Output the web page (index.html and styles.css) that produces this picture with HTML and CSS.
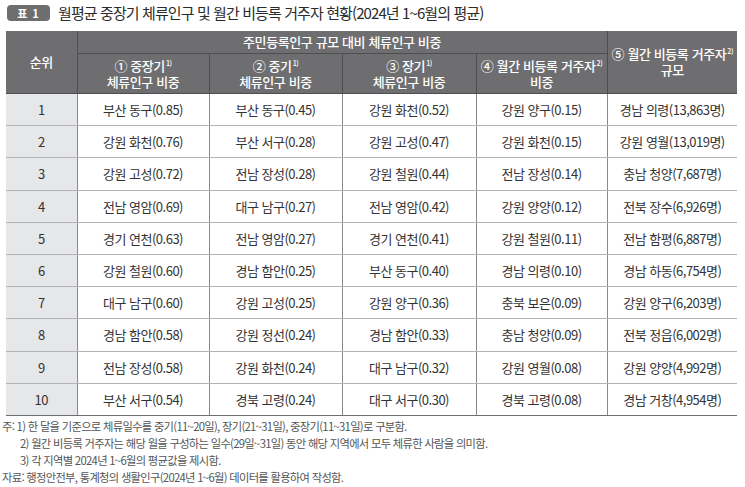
FILE: index.html
```html
<!DOCTYPE html>
<html lang="ko">
<head>
<meta charset="utf-8">
<link rel="stylesheet" href="styles.css">
</head>
<body>
<div class="page">
  <div class="title">
    <span class="badge">표 1</span>
    <span class="title-text">월평균 중장기 체류인구 및 월간 비등록 거주자 현황(2024년 1~6월의 평균)</span>
  </div>
  <table class="tbl">
    <colgroup>
      <col class="c0"><col class="c1"><col class="c2"><col class="c3"><col class="c4"><col class="c5">
    </colgroup>
    <thead>
      <tr class="h1">
        <th rowspan="2">순위</th>
        <th colspan="4">주민등록인구 규모 대비 체류인구 비중</th>
        <th rowspan="2"><span class="ln">⑤ 월간 비등록 거주자<sup>2)</sup></span><span class="ln">규모</span></th>
      </tr>
      <tr class="h2">
        <th><span class="ln">① 중장기<sup>1)</sup></span><span class="ln">체류인구 비중</span></th>
        <th><span class="ln">② 중기<sup>1)</sup></span><span class="ln">체류인구 비중</span></th>
        <th><span class="ln">③ 장기<sup>1)</sup></span><span class="ln">체류인구 비중</span></th>
        <th><span class="ln">④ 월간 비등록 거주자<sup>2)</sup></span><span class="ln">비중</span></th>
      </tr>
    </thead>
    <tbody>
      <tr><td class="rk">1</td><td>부산 동구(0.85)</td><td>부산 동구(0.45)</td><td>강원 화천(0.52)</td><td>강원 양구(0.15)</td><td>경남 의령(13,863명)</td></tr>
      <tr><td class="rk">2</td><td>강원 화천(0.76)</td><td>부산 서구(0.28)</td><td>강원 고성(0.47)</td><td>강원 화천(0.15)</td><td>강원 영월(13,019명)</td></tr>
      <tr><td class="rk">3</td><td>강원 고성(0.72)</td><td>전남 장성(0.28)</td><td>강원 철원(0.44)</td><td>전남 장성(0.14)</td><td>충남 청양(7,687명)</td></tr>
      <tr><td class="rk">4</td><td>전남 영암(0.69)</td><td>대구 남구(0.27)</td><td>전남 영암(0.42)</td><td>강원 양양(0.12)</td><td>전북 장수(6,926명)</td></tr>
      <tr><td class="rk">5</td><td>경기 연천(0.63)</td><td>전남 영암(0.27)</td><td>경기 연천(0.41)</td><td>강원 철원(0.11)</td><td>전남 함평(6,887명)</td></tr>
      <tr><td class="rk">6</td><td>강원 철원(0.60)</td><td>경남 함안(0.25)</td><td>부산 동구(0.40)</td><td>경남 의령(0.10)</td><td>경남 하동(6,754명)</td></tr>
      <tr><td class="rk">7</td><td>대구 남구(0.60)</td><td>강원 고성(0.25)</td><td>강원 양구(0.36)</td><td>충북 보은(0.09)</td><td>강원 양구(6,203명)</td></tr>
      <tr><td class="rk">8</td><td>경남 함안(0.58)</td><td>강원 정선(0.24)</td><td>경남 함안(0.33)</td><td>충남 청양(0.09)</td><td>전북 정읍(6,002명)</td></tr>
      <tr><td class="rk">9</td><td>전남 장성(0.58)</td><td>강원 화천(0.24)</td><td>대구 남구(0.32)</td><td>강원 영월(0.08)</td><td>강원 양양(4,992명)</td></tr>
      <tr><td class="rk">10</td><td>부산 서구(0.54)</td><td>경북 고령(0.24)</td><td>대구 서구(0.30)</td><td>경북 고령(0.08)</td><td>경남 거창(4,954명)</td></tr>
    </tbody>
  </table>
  <div class="notes">
    <p>주: 1) 한 달을 기준으로 체류일수를 중기(11~20일), 장기(21~31일), 중장기(11~31일)로 구분함.</p>
    <p class="ind">2) 월간 비등록 거주자는 해당 월을 구성하는 일수(29일~31일) 동안 해당 지역에서 모두 체류한 사람을 의미함.</p>
    <p class="ind">3) 각 지역별 2024년 1~6월의 평균값을 제시함.</p>
    <p>자료: 행정안전부, 통계청의 생활인구(2024년 1~6월) 데이터를 활용하여 작성함.</p>
  </div>
</div>
</body>
</html>
```

FILE: styles.css
```css
html, body {
  margin: 0;
  padding: 0;
  background: #ffffff;
}
body {
  font-family: "Noto Sans CJK KR", "Noto Sans", sans-serif;
  color: #333;
}
.page {
  width: 745px;
  height: 487px;
  overflow: hidden;
  padding: 3px 0 0 6px;
  box-sizing: border-box;
}
.title {
  display: flex;
  align-items: center;
  height: 19px;
  gap: 8px;
  padding-left: 1px;
}
.badge {
  display: inline-flex;
  align-items: center;
  justify-content: center;
  width: 43px;
  height: 16px;
  border-radius: 4px;
  background: #6d6e70;
  color: #fff;
  font-size: 11px;
  font-weight: 700;
  letter-spacing: 1px;
}
.title-text {
  font-size: 15px;
  color: #2b2b2b;
  letter-spacing: -0.9px;
  white-space: nowrap;
}
.tbl {
  margin-top: 9px;
  border-collapse: collapse;
  table-layout: fixed;
  width: 731px;
  font-size: 13px;
}
.c0 { width: 71px; }
.c1 { width: 132px; }
.c2 { width: 133px; }
.c3 { width: 134px; }
.c4 { width: 131px; }
.c5 { width: 130px; }
.tbl th {
  background: #6e6e70;
  color: #fff;
  font-weight: 500;
  font-size: 13px;
  line-height: 16px;
  border: 1px solid #4e4e50;
  border-top: 0;
  padding: 0;
  letter-spacing: -0.4px;
}
.tbl th .ln {
  display: block;
  height: 16px;
  line-height: 16px;
}
.tbl thead tr th:first-child { border-left: 0; }
.tbl thead tr.h1 th:last-child { border-right: 0; }
.tbl tr.h1 th { height: 22px; }
.tbl tr.h2 th { height: 39px; }
.tbl sup {
  font-size: 7px;
  line-height: 0;
  vertical-align: 5px;
  margin-left: 1px;
}
.tbl td {
  height: 31.2px;
  padding: 0;
  text-align: center;
  color: #333;
  border-bottom: 1px solid #b4b4b6;
  border-left: 1px solid #8a8a8c;
  letter-spacing: -0.5px;
}
.tbl td:first-child { border-left: 0; }
.tbl td.rk { background: #e6e7e8; }
.tbl tbody tr:last-child td { border-bottom: 1px solid #6e6e70; }
.notes {
  margin-top: 2px;
  margin-left: -4px;
  font-size: 11.3px;
  color: #555;
  letter-spacing: -0.7px;
}
.notes p {
  margin: 0;
  line-height: 17px;
  white-space: nowrap;
}
.notes p.ind { padding-left: 18px; }
```
